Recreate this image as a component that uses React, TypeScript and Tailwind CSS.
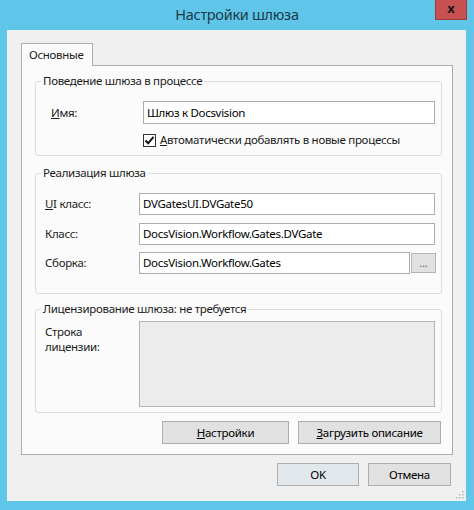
import React from "react";

const font = { fontFamily: '"Noto Sans", "Open Sans", Arial, sans-serif' };

function Input({ value, className = "" }: { value: string; className?: string }) {
  return (
    <div
      className={`h-[22px] bg-white border border-[#abadb3] flex items-center pl-[3px] text-[11.5px] tracking-[-0.3px] text-black ${className}`}
    >
      {value}
    </div>
  );
}

function Btn({ children, className = "" }: { children: React.ReactNode; className?: string }) {
  return (
    <div
      className={`h-[23px] bg-[#e1e1e1] border border-[#adadad] flex items-center justify-center text-[11.5px] tracking-[-0.3px] text-black ${className}`}
    >
      {children}
    </div>
  );
}

const lbl = "text-[11.5px] tracking-[-0.3px] text-[#1a1a1a]";
const legendCls = "ml-[5px] px-[2px] text-[11.5px] tracking-[-0.3px] leading-[16px] text-[#1a1a1a]";

export default function App() {
  return (
    <div
      className="relative w-[474px] h-[510px] bg-[#5fc6e9] flex flex-col pl-[7px] pr-[8px] pb-[9px] overflow-hidden"
      style={font}
    >
      <div className="h-[30px] -ml-[7px] -mr-[8px] flex items-center justify-center text-[14.5px] tracking-[-0.3px] text-[#1c3947]">
        Настройки шлюза
      </div>
      <div className="absolute left-[435px] top-0 w-[32px] h-[20px] bg-[#c75050] border border-t-0 border-[#9e3b3b] flex items-center justify-center">
        <span className="text-[13px] font-bold leading-none text-[#1a1a1a] -mt-[2px]">x</span>
      </div>

      <div className="relative flex-1 bg-[#f0f0f0] flex flex-col pl-[14px] pr-[13px] pt-[13px]">
        {/* tab */}
        <div className={`relative z-10 w-[72px] h-[23px] -mb-[1px] bg-[#fbfbfb] border border-b-0 border-[#adadad] flex items-center pl-[7px] ${lbl}`}>
          Основные
        </div>
        {/* panel */}
        <div className="border border-[#adadad] bg-[#fbfbfb] flex flex-col pl-[13px] pr-[10px] pt-[7px] pb-[10px]">
          {/* group 1 */}
          <fieldset className="border border-[#dcdcdc] rounded-[3px] pt-[12px] pb-[7px] pr-[6px]">
            <legend className={legendCls}>Поведение шлюза в процессе</legend>
            <div className="flex items-center">
              <div className={`w-[107px] pl-[15px] ${lbl}`}>
                <span className="underline">И</span>мя:
              </div>
              <Input value="Шлюз к Docsvision" className="flex-1 h-[23px]" />
            </div>
            <div className="flex items-center mt-[8px] pl-[107px] h-[16px]">
              <div className="w-[13px] h-[13px] border border-[#333] bg-white flex items-center justify-center">
                <svg width="11" height="11" viewBox="0 0 11 11">
                  <path d="M1.5 5.5 L4.2 8.3 L9.5 1.8" fill="none" stroke="#111" strokeWidth="2" />
                </svg>
              </div>
              <span className={`ml-[4px] ${lbl}`}>
                <span className="underline">А</span>втоматически добавлять в новые процессы
              </span>
            </div>
          </fieldset>

          {/* group 2 */}
          <fieldset className="mt-[9px] border border-[#dcdcdc] rounded-[3px] pt-[12px] pb-[19px] pr-[6px]">
            <legend className={legendCls}>Реализация шлюза</legend>
            <div className="flex items-center">
              <div className={`w-[103px] pl-[9px] ${lbl}`}>
                <span className="underline">U</span>I класс:
              </div>
              <Input value="DVGatesUI.DVGate50" className="flex-1" />
            </div>
            <div className="flex items-center mt-[8px]">
              <div className={`w-[103px] pl-[9px] ${lbl}`}>Класс:</div>
              <Input value="DocsVision.Workflow.Gates.DVGate" className="flex-1" />
            </div>
            <div className="flex items-center mt-[7px]">
              <div className={`w-[103px] pl-[9px] ${lbl}`}>Сборка:</div>
              <Input value="DocsVision.Workflow.Gates" className="flex-1" />
              <div className="ml-[1px] -mr-[1px] w-[25px] h-[20px] bg-[#e1e1e1] border border-[#b5b5b5] flex items-center justify-center text-[10px] text-[#555] leading-none">
                ...
              </div>
            </div>
          </fieldset>

          {/* group 3 */}
          <fieldset className="mt-[7px] border border-[#dcdcdc] rounded-[3px] pt-[4px] pb-[5px] pr-[6px]">
            <legend className={legendCls}>Лицензирование шлюза: не требуется</legend>
            <div className="flex items-start">
              <div className={`w-[103px] pl-[9px] pt-[3px] leading-[15px] ${lbl}`}>
                Строка
                <br />
                лицензии:
              </div>
              <div className="flex-1 h-[86px] bg-[#ececec] border border-[#b5b5b5]" />
            </div>
          </fieldset>

          {/* buttons */}
          <div className="flex justify-end gap-[9px] mt-[8px] pr-[1px]">
            <Btn className="w-[127px]">
              <span className="underline">Н</span>астройки
            </Btn>
            <Btn className="w-[143px]">
              <span className="underline">З</span>агрузить описание
            </Btn>
          </div>
        </div>

        {/* bottom buttons */}
        <div className="flex justify-end gap-[9px] mt-[8px] pr-[2px]">
          <Btn className="w-[82px] border-[#3c7fb1] bg-[#e3e8ec]">OK</Btn>
          <Btn className="w-[83px]">Отмена</Btn>
        </div>

        {/* resize grip */}
        <svg className="absolute right-[2px] bottom-[2px]" width="8" height="8" viewBox="0 0 8 8">
          <rect x="6" y="0" width="1.5" height="1.5" fill="#b8b8b8" />
          <rect x="3" y="3" width="1.5" height="1.5" fill="#b8b8b8" />
          <rect x="6" y="3" width="1.5" height="1.5" fill="#b8b8b8" />
          <rect x="0" y="6" width="1.5" height="1.5" fill="#b8b8b8" />
          <rect x="3" y="6" width="1.5" height="1.5" fill="#b8b8b8" />
          <rect x="6" y="6" width="1.5" height="1.5" fill="#b8b8b8" />
        </svg>
      </div>
    </div>
  );
}
